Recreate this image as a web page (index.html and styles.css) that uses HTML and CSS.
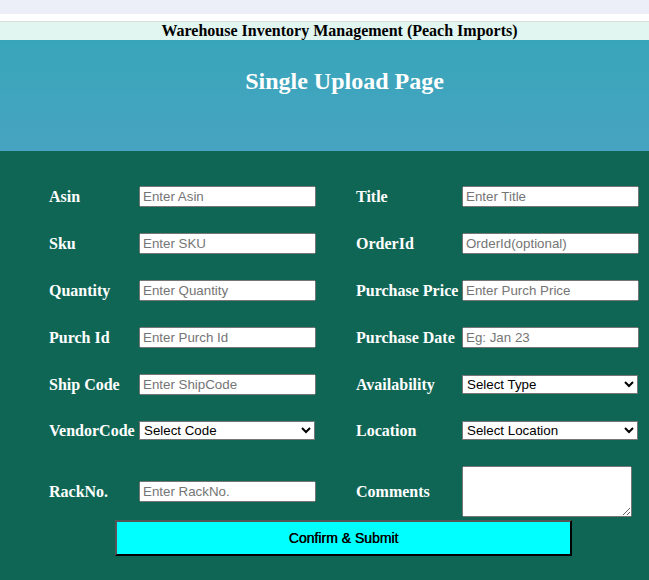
FILE: index.html
```html
<!DOCTYPE html>
<html>
<head>
<meta charset="utf-8">
<link rel="stylesheet" href="styles.css">
</head>
<body>
<div class="topbar"></div>
<div class="gap"></div>
<div class="brand">Warehouse Inventory Management (Peach Imports)</div>
<div class="hero"><h2 class="hero-title">Single Upload Page</h2></div>
<main class="main">
  <form class="form">
    <label class="lbl">Asin</label><input class="inp" type="text" placeholder="Enter Asin"><span></span>
    <label class="lbl">Title</label><input class="inp" type="text" placeholder="Enter Title">

    <label class="lbl">Sku</label><input class="inp" type="text" placeholder="Enter SKU"><span></span>
    <label class="lbl">OrderId</label><input class="inp" type="text" placeholder="OrderId(optional)">

    <label class="lbl">Quantity</label><input class="inp" type="text" placeholder="Enter Quantity"><span></span>
    <label class="lbl">Purchase Price</label><input class="inp" type="text" placeholder="Enter Purch Price">

    <label class="lbl">Purch Id</label><input class="inp" type="text" placeholder="Enter Purch Id"><span></span>
    <label class="lbl">Purchase Date</label><input class="inp" type="text" placeholder="Eg: Jan 23">

    <label class="lbl">Ship Code</label><input class="inp" type="text" placeholder="Enter ShipCode"><span></span>
    <label class="lbl">Availability</label><select class="sel"><option>Select Type</option></select>

    <label class="lbl">VendorCode</label><select class="sel"><option>Select Code</option></select><span></span>
    <label class="lbl">Location</label><select class="sel"><option>Select Location</option></select>

    <label class="lbl">RackNo.</label><input class="inp" type="text" placeholder="Enter RackNo."><span></span>
    <label class="lbl">Comments</label><textarea class="txt"></textarea>
  </form>
  <button class="submit" type="button">Confirm &amp; Submit</button>
</main>
</body>
</html>
```
FILE: styles.css
```css
html, body {
  margin: 0;
  padding: 0;
}
body {
  width: 649px;
  height: 580px;
  overflow: hidden;
  background: #0f6655;
  font-family: "Liberation Serif", "Times New Roman", serif;
}
.topbar {
  height: 14px;
  background: #eceef8;
}
.gap {
  height: 7px;
  background: #ffffff;
  border-bottom: 1px solid #dadcdc;
}
.brand {
  height: 18px;
  line-height: 18px;
  background: #e2f6f1;
  color: #000;
  font-weight: bold;
  font-size: 16px;
  text-align: center;
  padding-left: 30px;
}
.hero {
  height: 111px;
  background: linear-gradient(#38a6ba, #47a3c1);
  box-sizing: border-box;
  padding-top: 28px;
  padding-left: 40px;
}
.hero-title {
  margin: 0;
  color: #ffffff;
  font-size: 24px;
  font-weight: bold;
  text-align: center;
}
.main {
  padding-top: 35px;
}
.form {
  display: grid;
  grid-template-columns: 90px 177px 40px 106px 177px;
  row-gap: 26px;
  align-items: center;
  padding-left: 49px;
  margin: 0;
}
.lbl {
  color: #ffffff;
  font-weight: bold;
  font-size: 16px;
  white-space: nowrap;
}
.inp {
  box-sizing: border-box;
  width: 177px;
  height: 21px;
  margin: 0;
  font-family: "Liberation Sans", Arial, sans-serif;
  font-size: 13.33px;
}
.inp::placeholder {
  color: #757575;
}
.sel {
  box-sizing: border-box;
  width: 176px;
  height: 19px;
  margin: 0;
  font-family: "Liberation Sans", Arial, sans-serif;
  font-size: 13.33px;
  color: #000;
  background: #fff;
  border: 1px solid #767676;
  border-radius: 0;
}
.txt {
  box-sizing: border-box;
  width: 170px;
  height: 51px;
  margin: 0;
}
.submit {
  display: block;
  margin: 3px 0 0 115px;
  width: 457px;
  height: 36px;
  background: #00ffff;
  border-style: solid;
  border-width: 2px;
  border-color: #555555 #000000 #000000 #555555;
  font-family: "Liberation Sans", Arial, sans-serif;
  font-size: 14px;
  color: #000;
  text-shadow: 0.4px 0 0 #000;
  padding: 0;
}
```
